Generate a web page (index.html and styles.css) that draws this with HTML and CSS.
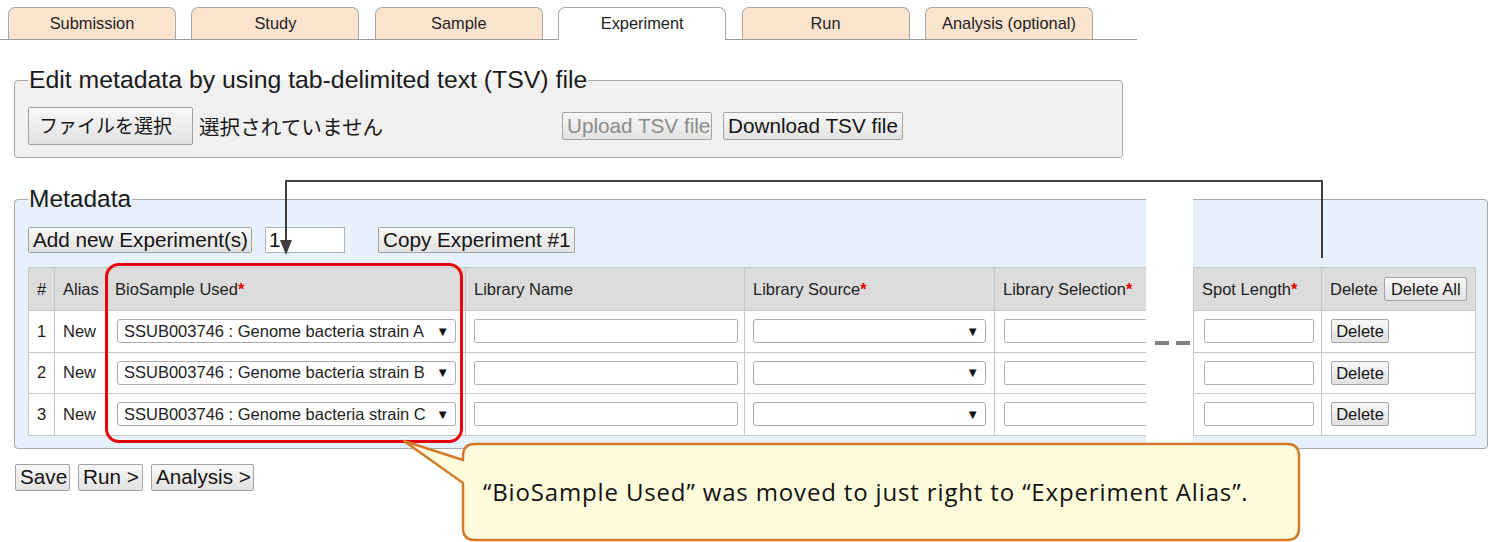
FILE: index.html
```html
<!DOCTYPE html>
<html lang="en">
<head>
<meta charset="utf-8">
<title>Experiment metadata</title>
<link rel="stylesheet" href="styles.css">
</head>
<body>
<div class="page">
  <nav class="tabs">
    <div class="tab">Submission</div>
    <div class="tab">Study</div>
    <div class="tab">Sample</div>
    <div class="tab active">Experiment</div>
    <div class="tab">Run</div>
    <div class="tab">Analysis (optional)</div>
  </nav>

  <fieldset class="box tsv">
    <legend class="tsv-legend">Edit metadata by using tab-delimited text (TSV) file</legend>
    <div class="tsv-row">
      <div class="file-area">
        <button class="btn file-btn">ファイルを選択</button>
        <span class="file-none">選択されていません</span>
      </div>
      <button class="btn btn-big upload" disabled>Upload TSV file</button>
      <button class="btn btn-big download">Download TSV file</button>
    </div>
  </fieldset>

  <fieldset class="box meta">
    <legend class="meta-legend">Metadata</legend>
    <div class="meta-tools">
      <button class="btn btn-big add">Add new Experiment(s)</button>
      <input class="num" type="text" value="1">
      <button class="btn btn-big copy">Copy Experiment #1</button>
    </div>
    <table class="grid">
      <colgroup>
        <col class="c-num"><col class="c-alias"><col class="c-bio"><col class="c-name">
        <col class="c-src"><col class="c-sel"><col class="c-spot"><col class="c-del">
      </colgroup>
      <thead>
        <tr>
          <th>#</th>
          <th>Alias</th>
          <th>BioSample Used<span class="star">*</span></th>
          <th>Library Name</th>
          <th>Library Source<span class="star">*</span></th>
          <th>Library Selection<span class="star">*</span></th>
          <th>Spot Length<span class="star">*</span></th>
          <th class="del-head">Delete <button class="btn btn-small delall">Delete All</button></th>
        </tr>
      </thead>
      <tbody>
        <tr>
          <td>1</td><td>New</td>
          <td><div class="sel bio"><span>SSUB003746 : Genome bacteria strain A</span><span class="arrow">▼</span></div></td>
          <td><div class="txt name"></div></td>
          <td><div class="sel src"><span></span><span class="arrow">▼</span></div></td>
          <td><div class="txt libsel"></div></td>
          <td><div class="txt spot"></div></td>
          <td><button class="btn btn-small del">Delete</button></td>
        </tr>
        <tr>
          <td>2</td><td>New</td>
          <td><div class="sel bio"><span>SSUB003746 : Genome bacteria strain B</span><span class="arrow">▼</span></div></td>
          <td><div class="txt name"></div></td>
          <td><div class="sel src"><span></span><span class="arrow">▼</span></div></td>
          <td><div class="txt libsel"></div></td>
          <td><div class="txt spot"></div></td>
          <td><button class="btn btn-small del">Delete</button></td>
        </tr>
        <tr>
          <td>3</td><td>New</td>
          <td><div class="sel bio"><span>SSUB003746 : Genome bacteria strain C</span><span class="arrow">▼</span></div></td>
          <td><div class="txt name"></div></td>
          <td><div class="sel src"><span></span><span class="arrow">▼</span></div></td>
          <td><div class="txt libsel"></div></td>
          <td><div class="txt spot"></div></td>
          <td><button class="btn btn-small del">Delete</button></td>
        </tr>
      </tbody>
    </table>
  </fieldset>

  <div class="actions">
    <button class="btn btn-big save">Save</button>
    <button class="btn btn-big run">Run &gt;</button>
    <button class="btn btn-big analysis">Analysis &gt;</button>
  </div>

  <!-- annotation overlays -->
  <div class="gap"><span class="dash"></span><span class="dash"></span></div>

  <svg class="connector" width="1490" height="542" viewBox="0 0 1490 542">
    <path d="M286 243 V181 H1322 V258" fill="none" stroke="#3f3f3f" stroke-width="2"/>
    <polygon points="280,240 292,240 286,255" fill="#3f3f3f"/>
  </svg>

  <div class="highlight"></div>

  <svg class="callout" width="1490" height="542" viewBox="0 0 1490 542">
    <path d="M475 444 H1287 Q1299 444 1299 456 V528 Q1299 540 1287 540 H475 Q463 540 463 528 V483 L404 441 L463 460 V456 Q463 444 475 444 Z"
          fill="#fffcdc" stroke="#d47a2c" stroke-width="2.5" stroke-linejoin="round"/>
  </svg>
  <div class="callout-text">“BioSample Used” was moved to just right to “Experiment Alias”.</div>
</div>
</body>
</html>
```

FILE: styles.css
```css
body {
  margin: 0;
  background: #ffffff;
  font-family: "Liberation Sans", Arial, sans-serif;
  color: #1e1e1e;
}

.page {
  position: relative;
  width: 1490px;
  height: 542px;
  overflow: hidden;
}

/* Tabs */
.tabs {
  display: flex;
  align-items: flex-start;
  gap: 15.4px;
  width: 1137px;
  height: 40px;
  box-sizing: border-box;
  padding: 7px 0 0 8px;
  border-bottom: 1px solid #9c9c9c;
}

.tab {
  width: 168px;
  height: 32px;
  box-sizing: border-box;
  display: flex;
  align-items: center;
  justify-content: center;
  border: 1px solid #a8a8a8;
  border-bottom: none;
  border-radius: 7px 7px 0 0;
  background: #fde4cf;
  font-size: 16.4px;
  color: #222;
}

.tab.active {
  background: #ffffff;
  height: 33px;
  position: relative;
  padding-bottom: 1px;
}

/* Fieldsets */
.box {
  box-sizing: border-box;
  border: 1px solid #a9a9a9;
  border-radius: 4px;
  min-inline-size: 0;
}

.box legend {
  padding: 0 1px;
  line-height: 26px;
  color: #1a1a1a;
}

.tsv {
  margin: 27px 0 0 14px;
  width: 1109px;
  background: #f1f1f1;
  padding: 14px 13px 12px 13px;
}

.tsv-legend {
  font-size: 24.8px;
}

.tsv-row {
  display: flex;
  align-items: center;
  height: 38px;
}

.file-area {
  width: 534px;
  display: flex;
  align-items: center;
  gap: 6px;
}

.btn {
  font-family: "Liberation Sans", Arial, sans-serif;
  color: #141414;
  background: linear-gradient(#f8f8f8, #e2e2e2);
  border: 1px solid #a3a3a3;
  border-radius: 2px;
  box-sizing: border-box;
  padding: 0 4px;
  line-height: 1;
  white-space: nowrap;
}

.btn-big {
  font-size: 20.7px;
  height: 27px;
}

.btn-small {
  font-size: 16.5px;
  height: 24px;
  padding: 0 4px;
}

.file-btn {
  width: 165px;
  height: 38px;
  font-family: "Liberation Sans", "Noto Sans CJK JP", sans-serif;
  font-size: 19px;
  text-align: left;
  padding: 0 10px;
}

.file-none {
  font-family: "Liberation Sans", "Noto Sans CJK JP", sans-serif;
  font-size: 20.6px;
  color: #1a1a1a;
}

.upload {
  width: 150px;
  height: 28px;
  color: #8c8c8c;
}

.download {
  width: 180px;
  height: 28px;
  margin-left: 11px;
}

/* Metadata */
.meta {
  margin: 28px 0 0 14px;
  width: 1474px;
  background: #e7f1fb;
  padding: 15px 12px 12px 13px;
}

.meta-legend {
  font-size: 24.5px;
}

.meta-tools {
  display: flex;
  align-items: center;
  height: 26px;
}

.add {
  width: 224px;
  height: 26px;
}

.num {
  width: 80px;
  height: 26px;
  box-sizing: border-box;
  margin: 0 33px 0 13px;
  border: 1px solid #b5b5b5;
  background: #fff;
  font-family: "Liberation Sans", Arial, sans-serif;
  font-size: 20.7px;
  padding: 0 3px;
  color: #111;
}

.copy {
  width: 197px;
  height: 26px;
}

.grid {
  margin-top: 14px;
  width: 1447px;
  border-collapse: collapse;
  table-layout: fixed;
  font-size: 16.5px;
}

.c-num { width: 26px; }
.c-alias { width: 52px; }
.c-bio { width: 359px; }
.c-name { width: 279px; }
.c-src { width: 250px; }
.c-sel { width: 199px; }
.c-spot { width: 128px; }
.c-del { width: 154px; }

.grid th,
.grid td {
  border: 1px solid #c7c7c7;
  padding: 0 8px;
  text-align: left;
  font-weight: normal;
  white-space: nowrap;
  overflow: hidden;
  color: #1e1e1e;
}

.grid th {
  background: #dcdcdc;
  height: 42px;
  vertical-align: middle;
}

.grid td {
  background: #ffffff;
  height: 40.6px;
}

.star {
  color: #e60000;
  font-weight: bold;
}

.del-head .delall {
  width: 83px;
  height: 24px;
  margin-left: 2px;
}

.sel {
  display: flex;
  align-items: center;
  justify-content: space-between;
  height: 24px;
  box-sizing: border-box;
  border: 1px solid #ababab;
  border-radius: 3px;
  background: #ffffff;
  padding: 0 6px 0 6px;
  font-size: 16.5px;
}

.sel .arrow {
  font-size: 13px;
  color: #111;
}

.bio {
  width: 339px;
  margin-left: 2px;
}

.src {
  width: 233px;
}

.txt {
  height: 24px;
  box-sizing: border-box;
  border: 1px solid #b2b2b2;
  border-radius: 2px;
  background: #fff;
}

.name { width: 264px; }
.libsel { width: 180px; margin-left: 1px; }
.spot { width: 110px; margin-left: 2px; }

.del {
  width: 58px;
  margin-left: 1px;
}

/* Bottom actions */
.actions {
  display: flex;
  gap: 8px;
  margin: 15px 0 0 15px;
}

.save { width: 55px; }
.run { width: 65px; }
.analysis { width: 103px; }

/* Annotation overlays */
.gap {
  position: absolute;
  left: 1146px;
  top: 194px;
  width: 47px;
  height: 248px;
  background: #ffffff;
  display: flex;
  align-items: flex-start;
  gap: 7px;
  padding: 147px 0 0 9px;
  box-sizing: border-box;
}

.dash {
  width: 14px;
  height: 4px;
  background: #808080;
}

.connector,
.callout {
  position: absolute;
  left: 0;
  top: 0;
  pointer-events: none;
}

.highlight {
  position: absolute;
  left: 105px;
  top: 263px;
  width: 358px;
  height: 180px;
  box-sizing: border-box;
  border: 3px solid #e8000b;
  border-radius: 14px;
}

.callout-text {
  position: absolute;
  left: 483px;
  top: 476px;
  font-family: "Open Sans", "Noto Sans", sans-serif;
  font-size: 24px;
  letter-spacing: 0.85px;
  line-height: 32px;
  color: #111;
  white-space: nowrap;
}
```
